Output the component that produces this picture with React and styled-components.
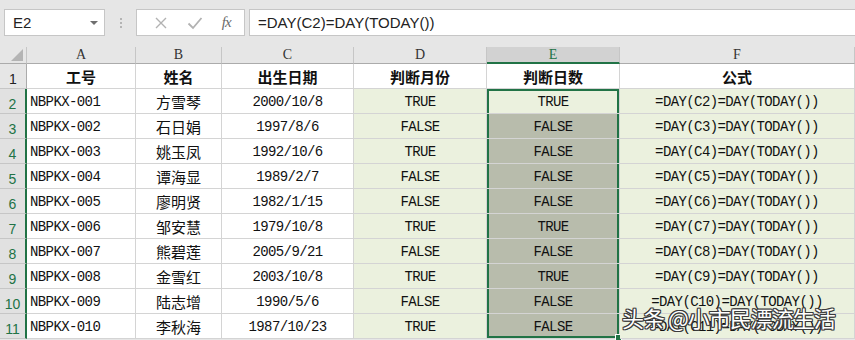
import React from 'react'
import styled, { createGlobalStyle, css } from 'styled-components'

const GREEN = '#217346'
const GRID = '#d4d4d4'

const Global = createGlobalStyle`
  body {
    margin: 0;
    background: #e6e6e6;
    font-family: "Liberation Sans", "Noto Sans CJK SC", sans-serif;
  }
`

const Page = styled.div`
  width: 855px;
  height: 340px;
  overflow: hidden;
  position: relative;
  background: #e6e6e6;
`

const Toolbar = styled.div`
  height: 47px;
  display: flex;
  align-items: flex-start;
  padding: 9px 0 0 4px;
  box-sizing: border-box;
`

const NameBox = styled.div`
  width: 101px;
  height: 27px;
  box-sizing: border-box;
  background: #fff;
  border: 1px solid #c6c6c6;
  display: flex;
  align-items: center;
  justify-content: space-between;
  padding: 0 6px 0 8px;
  font-size: 15px;
  color: #222;
`

const Caret = styled.span`
  width: 0;
  height: 0;
  border-left: 4px solid transparent;
  border-right: 4px solid transparent;
  border-top: 4px solid #6f6f6f;
`

const Dots = styled.div`
  width: 31px;
  height: 27px;
  display: flex;
  flex-direction: column;
  align-items: center;
  justify-content: center;
  gap: 2px;

  span {
    width: 2px;
    height: 2px;
    background: #b4b4b4;
  }
`

const IconBox = styled.div`
  width: 109px;
  height: 27px;
  box-sizing: border-box;
  background: #fff;
  border: 1px solid #c6c6c6;
  display: flex;
  align-items: center;
  justify-content: space-around;
  padding: 0 4px 0 8px;
`

const Fx = styled.span`
  font-family: "Liberation Serif", serif;
  font-style: italic;
  font-size: 15px;
  color: #6a6a6a;
  letter-spacing: -1px;
`

const Formula = styled.div`
  flex: 1;
  margin-left: 4px;
  height: 27px;
  box-sizing: border-box;
  background: #fff;
  border: 1px solid #c6c6c6;
  border-right: none;
  display: flex;
  align-items: center;
  padding-left: 8px;
  font-size: 15px;
  color: #222;
`

const Sheet = styled.div`
  display: grid;
  grid-template-columns: 27px 109px 86px 132px 133px 133px 235px;
  grid-template-rows: 17px repeat(11, 25px);
`

const Corner = styled.div`
  background: #e6e6e6;
  border-right: 1px solid #c6c6c6;
  border-bottom: 1px solid #ababab;
  box-sizing: border-box;
  display: flex;
  align-items: flex-end;
  justify-content: flex-end;
  padding: 0 3px 2px 0;
`

const ColHead = styled.div`
  box-sizing: border-box;
  background: ${p => (p.$active ? '#d2d2d2' : '#e6e6e6')};
  border-right: 1px solid #c6c6c6;
  border-bottom: ${p => (p.$active ? `2px solid ${GREEN}` : '1px solid #ababab')};
  display: flex;
  align-items: center;
  justify-content: center;
  font-family: "Liberation Serif", serif;
  font-size: 14px;
  color: ${p => (p.$active ? GREEN : '#333')};
`

const RowHead = styled.div`
  box-sizing: border-box;
  background: ${p => (p.$active ? '#e1e1e1' : '#e6e6e6')};
  border-bottom: 1px solid #c6c6c6;
  border-right: ${p => (p.$active ? `2px solid ${GREEN}` : '1px solid #ababab')};
  display: flex;
  align-items: flex-end;
  justify-content: center;
  padding-bottom: 1px;
  font-family: "Liberation Sans", sans-serif;
  font-size: 14px;
  color: ${p => (p.$active ? GREEN : '#222')};
`

const Cell = styled.div`
  position: relative;
  box-sizing: border-box;
  border-right: 1px solid ${GRID};
  border-bottom: 1px solid ${GRID};
  background: ${p => p.$bg || '#fff'};
  display: flex;
  align-items: center;
  justify-content: ${p => (p.$left ? 'flex-start' : 'center')};
  padding: 2px 0 0 ${p => (p.$left ? '3px' : '0')};
  font-family: "Liberation Mono", "Noto Sans CJK SC", monospace;
  font-size: 14px;
  letter-spacing: -0.6px;
  color: #111;
  white-space: nowrap;
  overflow: visible;

  ${p => p.$cjk && css`
    font-family: "Noto Sans CJK SC", sans-serif;
    font-size: 15px;
    letter-spacing: 0;
    padding-top: 0;
  `}

  ${p => p.$title && css`
    font-family: "Noto Sans CJK SC", sans-serif;
    font-weight: 700;
    font-size: 15px;
    letter-spacing: 0;
    padding-top: 0;
  `}

  ${p => p.$sel && css`
    box-shadow:
      inset 2px 0 0 ${GREEN},
      inset -2px 0 0 ${GREEN}
      ${p.$first ? `, inset 0 2px 0 ${GREEN}` : ''}
      ${p.$last ? `, inset 0 -2px 0 ${GREEN}` : ''};
  `}
`

const Handle = styled.span`
  position: absolute;
  right: -3px;
  bottom: -3px;
  width: 5px;
  height: 5px;
  background: ${GREEN};
  border: 1px solid #fff;
`

const Watermark = styled.div`
  position: absolute;
  left: 622px;
  top: 302px;
  font-family: "Noto Sans CJK SC", sans-serif;
  font-size: 22px;
  line-height: 30px;
  letter-spacing: -1px;
  color: #fff;
  white-space: nowrap;
  text-shadow:
    1px 0 0 #3a3a3a, -1px 0 0 #3a3a3a, 0 1px 0 #3a3a3a, 0 -1px 0 #3a3a3a,
    1px 1px 0 #3a3a3a, -1px -1px 0 #3a3a3a, 1px -1px 0 #3a3a3a, -1px 1px 0 #3a3a3a;
`

const rows = [
  ['NBPKX-001', '方雪琴', '2000/10/8', 'TRUE', 'TRUE'],
  ['NBPKX-002', '石日娟', '1997/8/6', 'FALSE', 'FALSE'],
  ['NBPKX-003', '姚玉凤', '1992/10/6', 'TRUE', 'FALSE'],
  ['NBPKX-004', '谭海显', '1989/2/7', 'FALSE', 'FALSE'],
  ['NBPKX-005', '廖明贤', '1982/1/15', 'FALSE', 'FALSE'],
  ['NBPKX-006', '邹安慧', '1979/10/8', 'TRUE', 'TRUE'],
  ['NBPKX-007', '熊碧莲', '2005/9/21', 'FALSE', 'FALSE'],
  ['NBPKX-008', '金雪红', '2003/10/8', 'TRUE', 'TRUE'],
  ['NBPKX-009', '陆志增', '1990/5/6', 'FALSE', 'FALSE'],
  ['NBPKX-010', '李秋海', '1987/10/23', 'TRUE', 'FALSE'],
]

const LIGHT = '#ebf1de'
const SHADE = '#b8bcac'

const App = () => (
  <Page>
    <Global />
    <Toolbar>
      <NameBox>
        E2
        <Caret />
      </NameBox>
      <Dots><span /><span /><span /></Dots>
      <IconBox>
        <svg width="14" height="14" viewBox="0 0 14 14">
          <path d="M2 2 L12 12 M12 2 L2 12" stroke="#b2b2b2" strokeWidth="1.4" fill="none" />
        </svg>
        <svg width="16" height="14" viewBox="0 0 16 14">
          <path d="M1.5 7.5 L6 12 L14.5 2" stroke="#b2b2b2" strokeWidth="1.8" fill="none" />
        </svg>
        <Fx>fx</Fx>
      </IconBox>
      <Formula>=DAY(C2)=DAY(TODAY())</Formula>
    </Toolbar>

    <Sheet>
      <Corner>
        <svg width="12" height="12" viewBox="0 0 12 12">
          <path d="M12 0 L12 12 L0 12 Z" fill="#b4b4b4" />
        </svg>
      </Corner>
      {['A', 'B', 'C', 'D', 'E', 'F'].map(c => (
        <ColHead key={c} $active={c === 'E'}>{c}</ColHead>
      ))}

      <RowHead>1</RowHead>
      {['工号', '姓名', '出生日期', '判断月份', '判断日数', '公式'].map(t => (
        <Cell key={t} $title>{t}</Cell>
      ))}

      {rows.map((r, i) => {
        const first = i === 0
        const last = i === rows.length - 1
        return (
          <React.Fragment key={r[0]}>
            <RowHead $active>{i + 2}</RowHead>
            <Cell $left>{r[0]}</Cell>
            <Cell $cjk>{r[1]}</Cell>
            <Cell>{r[2]}</Cell>
            <Cell $bg={LIGHT}>{r[3]}</Cell>
            <Cell $bg={first ? LIGHT : SHADE} $sel $first={first} $last={last}>
              {r[4]}
              {last && <Handle />}
            </Cell>
            <Cell $bg={LIGHT}>{`=DAY(C${i + 2})=DAY(TODAY())`}</Cell>
          </React.Fragment>
        )
      })}
    </Sheet>

    <Watermark>头条 @小市民漂流生活</Watermark>
  </Page>
)

export default App
